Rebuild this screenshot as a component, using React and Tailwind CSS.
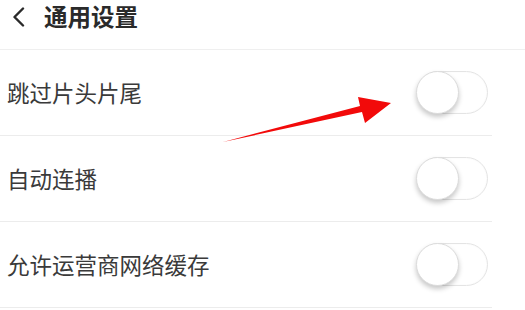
import React from "react";

function Toggle() {
  return (
    <div className="relative w-[71px] h-[43px] rounded-full border border-[#e4e4e4] bg-white shadow-[inset_0_0_2px_rgba(0,0,0,0.04)]">
      <div className="absolute left-[-2px] top-[-1px] w-[43px] h-[43px] rounded-full bg-white border border-[#dcdcdc] shadow-[0_3px_5px_rgba(0,0,0,0.22)]" />
    </div>
  );
}

function Row({ label }) {
  return (
    <div className="flex items-center justify-between h-[86px] border-b border-[#ececec] pl-[7px] pr-[4px]">
      <span className="text-[22.5px] text-[#3a3a3a] leading-none">{label}</span>
      <Toggle />
    </div>
  );
}

export default function App() {
  return (
    <div
      className="relative w-[525px] h-[310px] bg-white overflow-hidden"
      style={{ fontFamily: '"Noto Sans CJK SC", "Noto Sans", sans-serif' }}
    >
      <div className="flex items-center h-[50px] pl-[12px] pb-[16px] border-b border-[#efefef] w-[525px]">
        <svg width="14" height="20" viewBox="0 0 14 20" className="mr-[18px]">
          <path d="M11 1.5 L2.5 10 L11 18.5" fill="none" stroke="#2a2a2a" strokeWidth="2.4" strokeLinecap="round" strokeLinejoin="round" />
        </svg>
        <span className="text-[23.5px] font-bold text-[#2a2a2a] leading-none">通用设置</span>
      </div>
      <div className="w-[492px]">
        <Row label="跳过片头片尾" />
        <Row label="自动连播" />
        <Row label="允许运营商网络缓存" />
      </div>
      <svg className="absolute left-0 top-0 pointer-events-none" width="525" height="310" viewBox="0 0 525 310">
        <polygon points="223,142 360,106 358,97 391,103 365,123 362,112" fill="#f20a0a" />
      </svg>
    </div>
  );
}
